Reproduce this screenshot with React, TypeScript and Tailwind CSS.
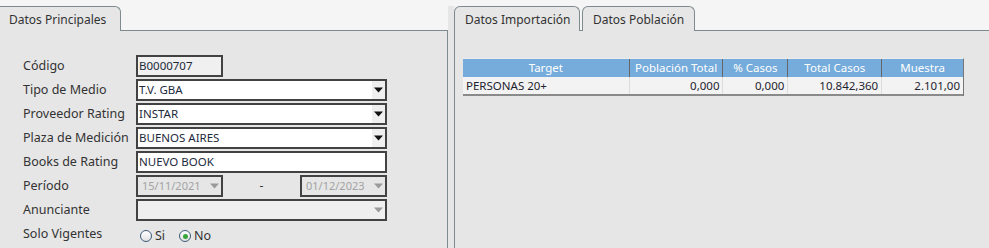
import React from 'react';

const font = { fontFamily: '"Noto Sans", "DejaVu Sans", sans-serif' };

interface FieldProps {
  value?: string;
  width?: string;
  disabled?: boolean;
  dropdown?: boolean;
  bg?: string;
}

// Caret for the combo boxes
const Caret: React.FC<{ disabled?: boolean }> = ({ disabled }) => (
  <div className={`w-[13px] h-full shrink-0 flex items-center justify-center ${disabled ? '' : 'bg-[#efefef]'}`}>
    <svg width="9" height="6" viewBox="0 0 9 6">
      <path d="M0 0.5 H9 L4.5 5.5 Z" fill={disabled ? '#9a9a9a' : '#111'} />
    </svg>
  </div>
);

const Field: React.FC<FieldProps> = ({ value, width = 'w-[251px]', disabled, dropdown, bg = 'bg-white' }) => (
  <div className={`${width} h-[22px] shrink-0 border-2 border-[#424242] ${bg} flex items-center`}>
    <span
      className={`flex-1 min-w-0 leading-[16px] whitespace-nowrap overflow-hidden ${
        disabled ? 'text-[#a3a3a3] pl-[4px] text-[11px]' : 'text-[#1d2a3d] pl-[1px] text-[11.5px]'
      }`}
    >
      {value}
    </span>
    {dropdown && <Caret disabled={disabled} />}
  </div>
);

const Row: React.FC<{ label: string; children: React.ReactNode }> = ({ label, children }) => (
  <div className="flex items-center h-[24px]">
    <div className="w-[136px] shrink-0 pl-[23px] whitespace-nowrap text-[12.5px] text-[#333]">{label}</div>
    {children}
  </div>
);

const Radio: React.FC<{ label: string; checked?: boolean }> = ({ label, checked }) => (
  <label className="flex items-center gap-[3px]">
    <span className="w-[12px] h-[12px] rounded-full border border-[#3d5a7a] bg-gradient-to-b from-[#ffffff] to-[#e2e2e2] flex items-center justify-center">
      {checked && <span className="w-[5px] h-[5px] rounded-full bg-[#3aa53a]" />}
    </span>
    <span className="text-[12.5px] text-[#333]">{label}</span>
  </label>
);

const Tab: React.FC<{ label: string; className?: string }> = ({ label, className = '' }) => (
  <div
    className={`h-[26px] -mb-[1px] mt-[6px] bg-[#e6e6e6] border-t border-r border-[#7d8b8d] rounded-t-[6px] flex items-center whitespace-nowrap text-[12px] text-[#333] ${className}`}
  >
    {label}
  </div>
);

const columns = [
  { title: 'Target', w: 'w-[167px]', align: 'text-left' },
  { title: 'Población Total', w: 'w-[94px]', align: 'text-right' },
  { title: '% Casos', w: 'w-[65px]', align: 'text-right' },
  { title: 'Total Casos', w: 'w-[94px]', align: 'text-right' },
  { title: 'Muestra', w: 'w-[81px]', align: 'text-right' },
];

const row = ['PERSONAS 20+', '0,000', '0,000', '10.842,360', '2.101,00'];

export default function App() {
  return (
    <div style={font} className="w-[989px] h-[248px] overflow-hidden bg-[#f5f5f5] flex">
      {/* Datos Principales */}
      <div className="w-[448px] flex flex-col shrink-0">
        <div className="h-[31px] flex border-b border-[#7d8b8d]">
          <Tab label="Datos Principales" className="w-[121px] pl-[9px] rounded-tl-none" />
        </div>
        <div className="flex-1 bg-[#e6e6e6] border-r border-[#7d8b8d] pt-[23px]">
          <Row label="Código">
            <Field value="B0000707" width="w-[87px]" bg="bg-[#f0f0f0]" />
          </Row>
          <Row label="Tipo de Medio">
            <Field value="T.V. GBA" dropdown />
          </Row>
          <Row label="Proveedor Rating">
            <Field value="INSTAR" dropdown />
          </Row>
          <Row label="Plaza de Medición">
            <Field value="BUENOS AIRES" dropdown />
          </Row>
          <Row label="Books de Rating">
            <Field value="NUEVO BOOK" />
          </Row>
          <Row label="Período">
            <Field value="15/11/2021" width="w-[87px]" bg="bg-[#e6e6e6]" disabled dropdown />
            <span className="w-[77px] shrink-0 text-center text-[12px] text-[#333]">-</span>
            <Field value="01/12/2023" width="w-[87px]" bg="bg-[#e6e6e6]" disabled dropdown />
          </Row>
          <Row label="Anunciante">
            <Field width="w-[251px]" bg="bg-[#efefef]" disabled dropdown />
          </Row>
          <Row label="Solo Vigentes">
            <div className="flex items-center gap-[14px] pl-[4px] pt-[4px]">
              <Radio label="Si" />
              <Radio label="No" checked />
            </div>
          </Row>
        </div>
      </div>

      {/* splitter */}
      <div className="w-[6px] mt-[6px] bg-[#e6e6e6] shrink-0" />

      {/* Datos Importación / Población */}
      <div className="flex-1 flex flex-col">
        <div className="h-[31px] flex gap-[2px] border-b border-[#7d8b8d]">
          <Tab label="Datos Importación" className="w-[126px] pl-[10px] border-l" />
          <Tab label="Datos Población" className="w-[113px] pl-[10px] border-l" />
        </div>
        <div className="flex-1 bg-[#e6e6e6] border-l border-[#7d8b8d] pt-[27px] pl-[8px]">
          <div className="w-[501px] border-t border-[#ececec] border-r border-r-[#777]">
            <div className="flex h-[18px] bg-[#76acdb]">
              {columns.map((c, i) => (
                <div
                  key={c.title}
                  className={`${c.w} ${i < columns.length - 1 ? 'border-r border-[#666]' : ''} text-center text-white text-[11.5px] leading-[18px]`}
                >
                  {c.title}
                </div>
              ))}
            </div>
            <div className="flex h-[19px] bg-[#f3f3f3] border-b-2 border-[#8a8a8a]">
              {columns.map((c, i) => (
                <div
                  key={c.title}
                  className={`${c.w} ${i < columns.length - 1 ? 'border-r border-[#dcdcdc]' : ''} ${c.align} px-[3px] text-[#1f2430] text-[11.5px] leading-[18px]`}
                >
                  {row[i]}
                </div>
              ))}
            </div>
          </div>
        </div>
      </div>
    </div>
  );
}
